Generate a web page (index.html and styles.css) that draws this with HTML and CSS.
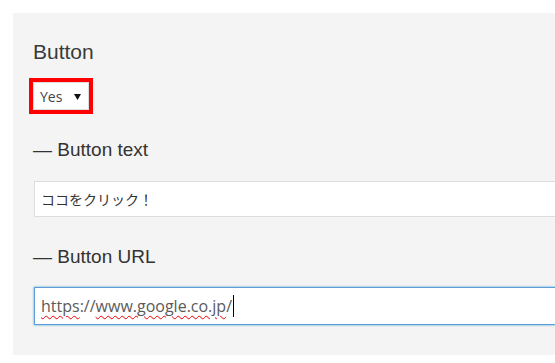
FILE: index.html
```html
<!DOCTYPE html>
<html lang="en">
<head>
  <meta charset="UTF-8" />
  <title>Button settings</title>
  <link rel="stylesheet" href="styles.css">
</head>
<body>
  <div class="panel">
    <h3 class="title">Button</h3>
    <div class="select-wrap">
      <div class="select">
        <span>Yes</span>
        <svg class="arrow" width="7" height="6" viewBox="0 0 7 6"><polygon points="0,0 7,0 3.5,6" fill="#111"/></svg>
      </div>
    </div>

    <label class="field-label">&mdash; Button text</label>
    <div class="input">ココをクリック！</div>

    <label class="field-label second">&mdash; Button URL</label>
    <div class="input focus"><span class="misspelled">https</span>://<span class="misspelled">www.google.co.jp</span>/<span class="caret"></span></div>
  </div>
</body>
</html>
```

FILE: styles.css
```css
body {
  margin: 0;
  padding: 13px 0 0 13px;
  background: #fff;
  font-family: "Liberation Sans", Arial, sans-serif;
  color: #444;
}

.panel {
  background: #f4f4f4;
  height: 342px;
  padding: 26px 0 0 20px;
  box-sizing: border-box;
}

.title {
  margin: 0;
  font-size: 21px;
  font-weight: normal;
  line-height: 26px;
  color: #3a3a3a;
}

.select-wrap {
  display: inline-block;
  margin: 13px 0 0 -4px;
  border: 4px solid #f00;
}

.select {
  display: flex;
  align-items: center;
  width: 56px;
  height: 28px;
  box-sizing: border-box;
  border: 1px solid #ddd;
  background: #fff;
  padding: 0 0 0 6px;
  font-family: "Open Sans", "Noto Sans", sans-serif;
  font-size: 14px;
  color: #444;
}

.arrow {
  margin: 1px 0 0 12px;
}

.field-label {
  display: block;
  margin-top: 24px;
  font-size: 19px;
  line-height: 24px;
  color: #333;
}

.field-label.second {
  margin-top: 28px;
}

.input {
  margin-top: 19px;
  margin-left: 1px;
  height: 36px;
  box-sizing: border-box;
  border: 1px solid #ddd;
  border-right: none;
  background: #fff;
  padding: 0 0 0 6px;
  display: flex;
  align-items: center;
  font-family: "Noto Sans CJK JP", "Open Sans", sans-serif;
  font-size: 14px;
  color: #333;
}

.input.focus {
  margin-top: 18px;
  height: 38px;
  border-color: #5b9dd9;
  box-shadow: 0 0 2px rgba(30, 140, 190, 0.8);
  font-family: "Open Sans", "Noto Sans", sans-serif;
  font-size: 16px;
  color: #5a5a5a;
}

.misspelled {
  text-decoration: underline wavy #e00;
  text-decoration-thickness: 1px;
  text-underline-offset: 3px;
}

.caret {
  display: inline-block;
  width: 1px;
  height: 22px;
  background: #000;
  margin-left: 1px;
}
```
